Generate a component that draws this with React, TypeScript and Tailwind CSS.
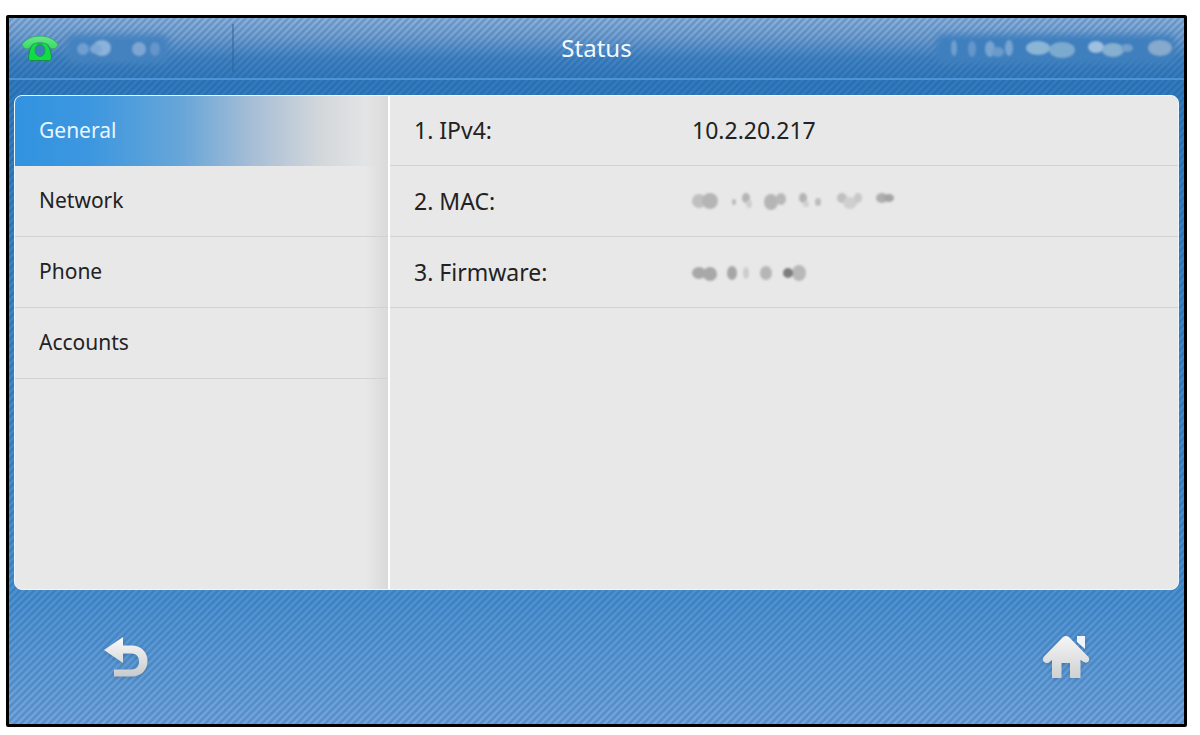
import { ReactNode, useState } from 'react';

type Blob = {
  x: number;
  y: number;
  rx: number;
  ry: number;
  fill: string;
};

type StatusRow = {
  label: string;
  value: ReactNode;
};

const menu = ['General', 'Network', 'Phone', 'Accounts'];

const accountBlobs: Blob[] = [
  { x: 12, y: 16, rx: 6, ry: 6, fill: '#6f9fd0' },
  { x: 31, y: 15, rx: 9, ry: 8, fill: '#8bb2da' },
  { x: 25, y: 16, rx: 6, ry: 5, fill: '#7da8d5' },
  { x: 68, y: 16, rx: 7, ry: 7, fill: '#7fa6d3' },
  { x: 84, y: 16, rx: 5, ry: 7, fill: '#6595ca' },
];

const clockBlobs: Blob[] = [
  { x: 14, y: 15, rx: 3, ry: 8, fill: '#6f9fcf' },
  { x: 32, y: 16, rx: 4, ry: 8, fill: '#6596ca' },
  { x: 50, y: 16, rx: 5, ry: 8, fill: '#78a4d0' },
  { x: 58, y: 19, rx: 6, ry: 5, fill: '#6c9acb' },
  { x: 69, y: 15, rx: 4, ry: 8, fill: '#78a4d0' },
  { x: 98, y: 15, rx: 12, ry: 7, fill: '#8bb5d5' },
  { x: 122, y: 17, rx: 13, ry: 8, fill: '#7caacf' },
  { x: 156, y: 14, rx: 8, ry: 6, fill: '#a0c0e0' },
  { x: 173, y: 17, rx: 11, ry: 7, fill: '#85b0cf' },
  { x: 187, y: 15, rx: 6, ry: 4, fill: '#749fcb' },
  { x: 220, y: 15, rx: 12, ry: 8, fill: '#86a9cc' },
];

const macBlobs: Blob[] = [
  { x: 7, y: 15, rx: 7, ry: 7, fill: '#c0c0c0' },
  { x: 18, y: 15, rx: 8, ry: 8, fill: '#b5b5b5' },
  { x: 42, y: 16, rx: 2, ry: 3, fill: '#bababa' },
  { x: 54, y: 12, rx: 4, ry: 5, fill: '#b4b4b4' },
  { x: 57, y: 18, rx: 3, ry: 4, fill: '#cfcfcf' },
  { x: 79, y: 16, rx: 7, ry: 8, fill: '#b5b5b5' },
  { x: 89, y: 13, rx: 5, ry: 6, fill: '#b8b8b8' },
  { x: 111, y: 12, rx: 4, ry: 5, fill: '#b4b4b4' },
  { x: 114, y: 18, rx: 3, ry: 3, fill: '#cfcfcf' },
  { x: 126, y: 16, rx: 3, ry: 4, fill: '#bcbcbc' },
  { x: 150, y: 12, rx: 5, ry: 5, fill: '#c0c0c0' },
  { x: 158, y: 17, rx: 7, ry: 6, fill: '#cfcfcf' },
  { x: 166, y: 12, rx: 4, ry: 5, fill: '#c8c8c8' },
  { x: 190, y: 12, rx: 6, ry: 5, fill: '#aeaeae' },
  { x: 197, y: 12, rx: 5, ry: 4, fill: '#a4a4a4' },
];

const firmwareBlobs: Blob[] = [
  { x: 7, y: 16, rx: 7, ry: 6, fill: '#a8a8a8' },
  { x: 18, y: 17, rx: 7, ry: 7, fill: '#a8a8a8' },
  { x: 40, y: 16, rx: 5, ry: 7, fill: '#a6a6a6' },
  { x: 54, y: 16, rx: 3, ry: 6, fill: '#cccccc' },
  { x: 74, y: 16, rx: 6, ry: 7, fill: '#b6b6b6' },
  { x: 107, y: 16, rx: 7, ry: 8, fill: '#b8b8b8' },
  { x: 96, y: 16, rx: 5, ry: 5, fill: '#7d7d7d' },
];

function Smudge({ blobs, width, patch }: { blobs: Blob[]; width: number; patch?: string }) {
  return (
    <svg width={width} height={30} viewBox={`0 0 ${width} 30`} className="overflow-visible" aria-hidden="true">
      {patch && <rect x="-4" y="2" width={width + 6} height="28" rx="6" fill={patch} className="blur-[3px]" />}
      <g className="blur-[1px]">
        {blobs.map((b) => (
          <ellipse key={`${b.x}-${b.y}`} cx={b.x} cy={b.y} rx={b.rx} ry={b.ry} fill={b.fill} />
        ))}
      </g>
    </svg>
  );
}

function PhoneIcon() {
  return (
    <svg width="38" height="27" viewBox="0 0 38 27" aria-hidden="true">
      <defs>
        <linearGradient id="phone" x1="0" y1="0" x2="0" y2="1">
          <stop offset="0" stopColor="#6be58c" />
          <stop offset="1" stopColor="#35dd62" />
        </linearGradient>
      </defs>
      <path d="M13 8C9 12 8 17 7.500 23Q7.500 25.500 9.500 25.500H28.500Q30.500 25.500 30.500 23C30 17 29 12 25 8Z" fill="#12dc45" stroke="#198f4b" />
      <path
        d="M1 9.500C5 3.500 12 1 19 1C26 1 33 3.500 37 9.500L35.500 12.500C32 15 29 14 27 9.500C22 7 16 7 11 9.500C9 14 6 15 2.500 12.500Z"
        fill="url(#phone)"
        stroke="#3aa575"
      />
      <ellipse cx="19" cy="15.500" rx="5" ry="6" fill="#3c7fb6" stroke="#1aa04c" />
    </svg>
  );
}

function BackIcon() {
  return (
    <svg width="46" height="42" viewBox="0 0 46 42" className="drop-shadow-sm" aria-hidden="true">
      <defs>
        <linearGradient id="back" x1="0" y1="0" x2="0" y2="1">
          <stop offset="0" stopColor="#fafafa" />
          <stop offset="1" stopColor="#c9cacc" />
        </linearGradient>
      </defs>
      <path d="M1 14L20 1V9.500H29C38 9.500 44.500 16 44.500 25S38 40.500 29 40.500H11V33.500H28C33.500 33.500 36 30 36 25.500S33.500 17.500 28 17.500H20V27Z" fill="url(#back)" />
    </svg>
  );
}

function HomeIcon() {
  return (
    <svg width="48" height="44" viewBox="0 0 48 44" className="drop-shadow-sm" aria-hidden="true">
      <defs>
        <linearGradient id="home" x1="0" y1="0" x2="0" y2="1">
          <stop offset="0" stopColor="#f6f6f6" />
          <stop offset="1" stopColor="#cfd0d2" />
        </linearGradient>
      </defs>
      <path d="M35 1H43V14L35 7Z" fill="#f1f5fb" />
      <path
        d="M21 2Q24 0 27 2L46.500 22Q48.500 26 45 27.500Q43 28 41 26.500L38.500 25V43H28V28H19.500V43H10V25L7 27.500Q4 29 1.500 26.500Q0 24 2 21.500Z"
        fill="url(#home)"
      />
    </svg>
  );
}

const rows: StatusRow[] = [
  { label: '1. IPv4:', value: '10.2.20.217' },
  { label: '2. MAC:', value: <Smudge blobs={macBlobs} width={204} /> },
  { label: '3. Firmware:', value: <Smudge blobs={firmwareBlobs} width={116} /> },
];

export default function App() {
  const [active, setActive] = useState('General');

  return (
    <div className="min-h-screen bg-white pt-[15px] pr-[13px] pb-2 pl-[6px] font-['Noto_Sans',sans-serif]">
      <div className="rounded-xs border-3 border-black bg-[repeating-linear-gradient(135deg,transparent_0px,#0b4c8c48_2px,#0b4c8c48_3px,transparent_5px),linear-gradient(to_bottom,#94b6df_0px,#7ca6d5_18px,#4686c5_40px,#357dc0_62px,#337ec1_80px,#4e94d4_570px,#78aae0_100%)]">
        <header className="grid h-[62px] grid-cols-3 items-center border-b-2 border-[#4f93d3] px-3">
          <div className="flex h-12 w-[213px] items-center gap-3 border-r-2 border-[#2f6299]/50">
            <PhoneIcon />
            <Smudge blobs={accountBlobs} width={95} patch="#4482bf" />
          </div>
          <h1 className="text-center text-2xl text-[#f0f9ff]">Status</h1>
          <div className="justify-self-end">
            <Smudge blobs={clockBlobs} width={232} patch="#3f7fbe" />
          </div>
        </header>

        <main className="mx-[5px] mt-[15px] flex min-h-[495px] overflow-hidden rounded-lg border border-[#eef7fd] bg-[#e8e8e8]">
          <nav className="w-[375px] shrink-0 border-r-2 border-white bg-[linear-gradient(to_right,transparent_94%,#d9d9d9)]">
            {menu.map((item) => (
              <button
                key={item}
                type="button"
                onClick={() => setActive(item)}
                className={
                  item === active
                    ? 'block h-[70px] w-full bg-[linear-gradient(to_right,#3293e0_0%,#3d97df_20%,#68a6d8_45%,#a5bdd6_63%,#d3d7db_82%,transparent_98%)] px-6 text-left text-[21px] text-[#e8f6ff]'
                    : 'block h-[71px] w-full border-b border-[#d2d2d2] px-6 text-left text-[21px] text-[#222]'
                }
              >
                {item}
              </button>
            ))}
          </nav>

          <dl className="flex-1">
            {rows.map((row) => (
              <div key={row.label} className="flex h-[71px] items-center border-b border-[#d2d2d2] px-6 text-[23px] text-[#222] first:h-[70px]">
                <dt className="w-[278px]">{row.label}</dt>
                <dd>{row.value}</dd>
              </div>
            ))}
          </dl>
        </main>

        <footer className="flex h-[134px] items-center justify-between px-[94px]">
          <button type="button" aria-label="Back">
            <BackIcon />
          </button>
          <button type="button" aria-label="Home">
            <HomeIcon />
          </button>
        </footer>
      </div>
    </div>
  );
}
